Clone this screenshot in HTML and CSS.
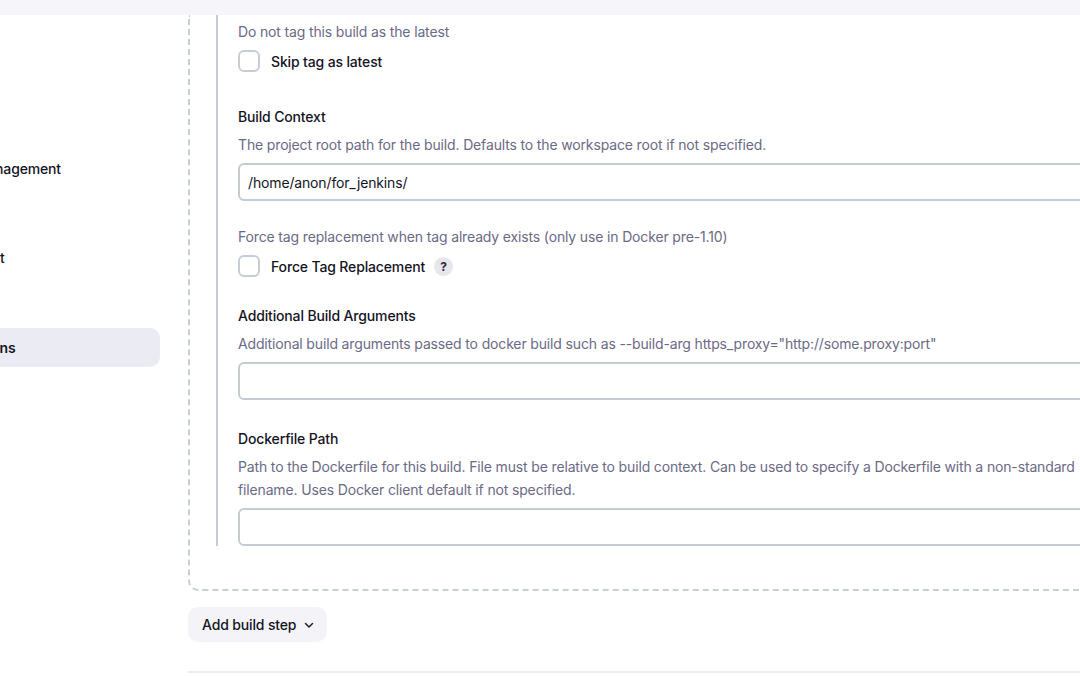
FILE: index.html
```html
<!DOCTYPE html>
<html lang="en">
<head>
<meta charset="utf-8">
<title>Configure</title>
<link rel="stylesheet" href="styles.css">
</head>
<body>
<div class="topbar"></div>
<div class="layout">
  <nav class="sidebar">
    <a class="side-item">General</a>
    <a class="side-item">Source Code Management</a>
    <a class="side-item">Triggers</a>
    <a class="side-item">Build Environment</a>
    <a class="side-item">Build Steps</a>
    <a class="side-item active">Post-build Actions</a>
  </nav>
  <main class="main">
    <div class="step-box">
      <div class="chunk">
        <div class="field field-first">
          <div class="desc">Do not tag this build as the latest</div>
          <label class="check-row">
            <span class="checkbox"></span>
            <span class="check-label">Skip tag as latest</span>
          </label>
        </div>

        <div class="field field-wide">
          <div class="label">Build Context</div>
          <div class="desc">The project root path for the build. Defaults to the workspace root if not specified.</div>
          <div class="input">/home/anon/for_jenkins/</div>
        </div>

        <div class="field field-desc">
          <div class="desc">Force tag replacement when tag already exists (only use in Docker pre-1.10)</div>
          <label class="check-row">
            <span class="checkbox"></span>
            <span class="check-label">Force Tag Replacement</span>
            <span class="help">?</span>
          </label>
        </div>

        <div class="field">
          <div class="label">Additional Build Arguments</div>
          <div class="desc">Additional build arguments passed to docker build such as --build-arg https_proxy="http://some.proxy:port"</div>
          <div class="input"></div>
        </div>

        <div class="field">
          <div class="label">Dockerfile Path</div>
          <div class="desc desc-wrap">Path to the Dockerfile for this build. File must be relative to build context. Can be used to specify a Dockerfile with a <span class="nobr">non-standard</span> filename. Uses Docker client default if not specified.</div>
          <div class="input"></div>
        </div>
      </div>
    </div>

    <button class="add-step" type="button">
      <span>Add build step</span>
      <svg class="chev" width="10" height="10" viewBox="0 0 10 10" aria-hidden="true"><path d="M1.5 3.5 L5 7 L8.5 3.5" fill="none" stroke="#1f1f2e" stroke-width="1.5" stroke-linecap="round" stroke-linejoin="round"/></svg>
    </button>

    <div class="divider"></div>
  </main>
</div>
</body>
</html>
```

FILE: styles.css
```css
html, body {
  margin: 0;
  padding: 0;
  background: #ffffff;
  overflow: hidden;
}

body {
  width: 1080px;
  height: 676px;
  font-family: Inter, "Noto Sans", sans-serif;
  font-size: 14px;
  letter-spacing: -0.15px;
  color: #14141f;
}

.topbar {
  height: 15px;
  background: #f6f6fa;
}

.layout {
  display: flex;
  align-items: flex-start;
}

.sidebar {
  flex-shrink: 0;
  width: 287px;
  margin-left: -127px;
  padding-top: 89px;
  display: flex;
  flex-direction: column;
  gap: 5.75px;
}

.side-item {
  display: flex;
  align-items: center;
  height: 39px;
  padding-left: 13px;
  border-radius: 10px;
  font-weight: 500;
  color: #14141f;
  white-space: nowrap;
}

.side-item.active {
  background: #ebebf3;
  font-weight: 600;
  letter-spacing: 0;
  padding-left: 18px;
}

.main {
  flex-shrink: 0;
  width: 960px;
  margin-left: 28px;
}

.step-box {
  border: 2px dashed #c7ced6;
  border-top: none;
  border-bottom-left-radius: 10px;
  padding-left: 26px;
  padding-bottom: 43px;
}

.chunk {
  border-left: 2px solid #c5ccd4;
  padding-left: 20px;
}

.field {
  margin-top: 29px;
}

.field-first {
  margin-top: 0;
  padding-top: 5px;
}

.field-wide {
  margin-top: 35px;
}

.field-desc {
  margin-top: 24px;
}

.label {
  line-height: 20px;
  font-weight: 500;
  color: #14141f;
  margin-bottom: 6px;
}

.desc {
  line-height: 23px;
  color: #6b6a85;
  margin-bottom: 7px;
}

.desc-wrap {
  max-width: 850px;
}

.nobr {
  white-space: nowrap;
}

.input {
  box-sizing: border-box;
  height: 38px;
  border: 2px solid #c4cbd3;
  border-radius: 6px;
  padding: 0 8px;
  display: flex;
  align-items: center;
  color: #14141f;
}

.check-row {
  display: flex;
  align-items: center;
  height: 22px;
}

.checkbox {
  box-sizing: border-box;
  width: 22px;
  height: 22px;
  border: 2px solid #c6cdd5;
  border-radius: 6px;
  background: #ffffff;
  flex-shrink: 0;
}

.check-label {
  margin-left: 11px;
  font-weight: 500;
  color: #14141f;
}

.help {
  margin-left: 9px;
  width: 19px;
  height: 19px;
  border-radius: 50%;
  background: #e6e6ec;
  color: #2a2a38;
  font-size: 12px;
  font-weight: 700;
  letter-spacing: 0;
  display: flex;
  align-items: center;
  justify-content: center;
}

.add-step {
  margin-top: 16px;
  height: 35px;
  display: flex;
  align-items: center;
  gap: 8px;
  padding: 0 13px 0 14px;
  border: none;
  border-radius: 10px;
  background: #f4f4f8;
  font-family: inherit;
  font-size: 14px;
  font-weight: 500;
  letter-spacing: -0.15px;
  color: #14141f;
}

.chev {
  display: block;
}

.divider {
  margin-top: 29px;
  height: 2px;
  background: #ececf1;
}
```
